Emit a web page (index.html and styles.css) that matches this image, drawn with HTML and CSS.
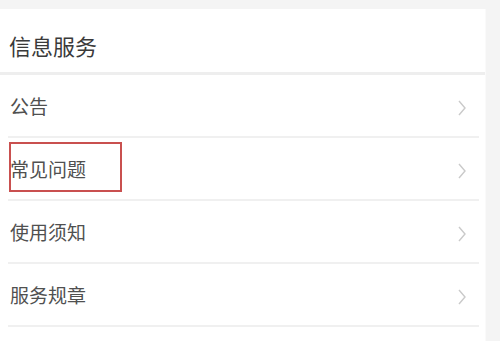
FILE: index.html
```html
<!DOCTYPE html>
<html lang="zh">
<head>
<meta charset="utf-8">
<link rel="stylesheet" href="styles.css">
</head>
<body>
<div class="page">
  <div class="card">
    <div class="header">信息服务</div>
    <div class="row"><span class="label">公告</span><svg class="chev" width="8" height="16" viewBox="0 0 8 16"><path d="M1 1 L7 8 L1 15" fill="none" stroke="#cacaca" stroke-width="1.4"/></svg></div>
    <div class="row marked"><span class="label">常见问题</span><span class="mark"></span><svg class="chev" width="8" height="16" viewBox="0 0 8 16"><path d="M1 1 L7 8 L1 15" fill="none" stroke="#cacaca" stroke-width="1.4"/></svg></div>
    <div class="row"><span class="label">使用须知</span><svg class="chev" width="8" height="16" viewBox="0 0 8 16"><path d="M1 1 L7 8 L1 15" fill="none" stroke="#cacaca" stroke-width="1.4"/></svg></div>
    <div class="row"><span class="label">服务规章</span><svg class="chev" width="8" height="16" viewBox="0 0 8 16"><path d="M1 1 L7 8 L1 15" fill="none" stroke="#cacaca" stroke-width="1.4"/></svg></div>
  </div>
  <div class="side"></div>
</div>
</body>
</html>
```
FILE: styles.css
```css
html, body {
  margin: 0;
  padding: 0;
  background: #f4f4f4;
  font-family: "Noto Sans CJK SC", "Noto Sans", sans-serif;
}
.page {
  display: flex;
  padding-top: 9px;
  height: 332px;
  overflow: hidden;
}
.card {
  flex: 1;
  background: #ffffff;
  display: flex;
  flex-direction: column;
}
.side {
  width: 14px;
  background: #f4f4f4;
  border-left: 1px solid #fafafa;
}
.header {
  height: 55px;
  padding: 8px 0 0 9px;
  display: flex;
  align-items: center;
  font-size: 22px;
  color: #3a3a3a;
  border-bottom: 3px solid #eeeeee;
}
.row {
  position: relative;
  height: 61px;
  margin: 0 6px 0 8px;
  padding: 0 13px 0 2px;
  display: flex;
  align-items: center;
  justify-content: space-between;
  border-bottom: 2px solid #f0f0f0;
}
.label {
  font-size: 19px;
  color: #505050;
}
.chev {
  display: block;
  margin-top: 4px;
}
.mark {
  position: absolute;
  left: 1px;
  top: 4px;
  width: 109px;
  height: 46px;
  border: 2px solid #c9504f;
}
```
